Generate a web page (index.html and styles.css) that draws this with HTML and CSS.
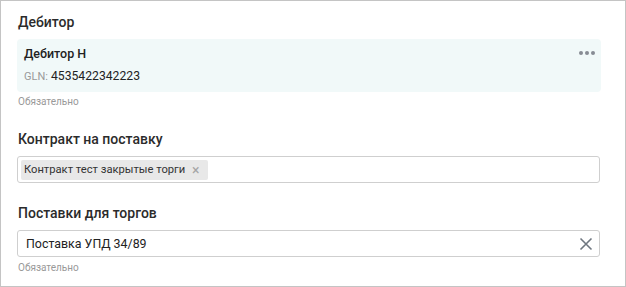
FILE: index.html
```html
<!DOCTYPE html>
<html lang="ru">
<head>
    <meta charset="UTF-8">
    <title>Дебитор</title>
    <link rel="stylesheet" href="styles.css">
</head>
<body>
    <div class="frame">
        <div class="field">
            <div class="field-label">Дебитор</div>
            <div class="debtor-card">
                <div class="debtor-name">Дебитор Н</div>
                <div class="debtor-gln"><span class="gln-label">GLN:</span> 4535422342223</div>
                <span class="more-btn"><i></i><i></i><i></i></span>
            </div>
            <div class="hint">Обязательно</div>
        </div>

        <div class="field">
            <div class="field-label">Контракт на поставку</div>
            <div class="select">
                <span class="chip">Контракт тест закрытые торги <span class="chip-remove">&times;</span></span>
            </div>
        </div>

        <div class="field">
            <div class="field-label">Поставки для торгов</div>
            <div class="select select-single">
                <span class="select-value">Поставка УПД 34/89</span>
                <svg class="clear-icon" width="14" height="14" viewBox="0 0 14 14">
                    <path d="M1.5 1.5 L12.5 12.5 M12.5 1.5 L1.5 12.5" stroke="#6f7780" stroke-width="1.6" fill="none"/>
                </svg>
            </div>
            <div class="hint hint-input">Обязательно</div>
        </div>
    </div>
</body>
</html>
```

FILE: styles.css
```css
* {
    margin: 0;
    padding: 0;
    box-sizing: border-box;
}

body {
    font-family: Roboto, "Liberation Sans", sans-serif;
    color: #333;
    background: #fff;
}

.frame {
    width: 626px;
    height: 287px;
    border: 1px solid #c4c4c4;
    padding: 12px 25px 0 16px;
}

.field {
    margin-bottom: 21px;
}

.field-label {
    font-size: 14px;
    line-height: 18px;
    font-weight: 500;
    color: #2b2b2b;
    margin-bottom: 8px;
    padding-left: 1px;
}

.debtor-card {
    position: relative;
    background: #f1f9f9;
    border-radius: 4px;
    padding: 7px 8px 7px 7px;
    margin-right: -1px;
}

.debtor-name {
    font-size: 12.5px;
    line-height: 16px;
    font-weight: 500;
    color: #222;
}

.debtor-gln {
    font-size: 12.2px;
    line-height: 16px;
    margin-top: 6px;
    color: #222;
}

.gln-label {
    font-size: 11px;
    color: #9a9a9a;
}

.more-btn {
    position: absolute;
    top: 12px;
    right: 6px;
    display: flex;
    gap: 2px;
}

.more-btn i {
    width: 4px;
    height: 4px;
    border-radius: 50%;
    background: #878c94;
}

.hint {
    font-size: 10px;
    line-height: 14px;
    color: #999;
    margin-top: 3px;
    padding-left: 1px;
}

.hint-input {
    margin-top: 4px;
}

.select {
    display: flex;
    align-items: center;
    height: 27px;
    border: 1px solid #cfcfcf;
    border-radius: 3px;
    padding: 0 3px;
}

.chip {
    display: inline-flex;
    align-items: center;
    height: 20px;
    padding: 0 8px 0 3px;
    background: #e8e8e8;
    border-radius: 2px;
    font-size: 11.2px;
    color: #333;
    white-space: pre;
}

.chip-remove {
    color: #a5a5a5;
    font-size: 14px;
    margin-left: 4px;
}

.select-single {
    justify-content: space-between;
    padding: 0 6px 0 8px;
}

.select-value {
    font-size: 12.4px;
    color: #222;
}

.clear-icon {
    display: block;
}
```
